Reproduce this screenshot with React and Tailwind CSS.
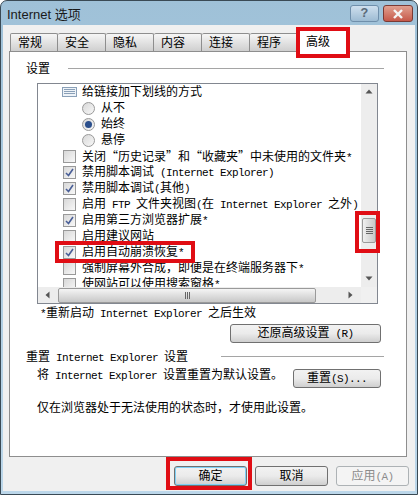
const cjk = "font-['Liberation_Mono','Noto_Sans_CJK_SC',monospace]";

function Latin({ children }) {
  return <span className="text-[11px] tracking-[-0.6px] whitespace-pre">{children}</span>;
}

function Quote({ children }) {
  return <span className="inline-block w-3 text-center font-['Noto_Sans_CJK_SC',sans-serif]">{children}</span>;
}

function Tab({ label, active }) {
  if (active) {
    return (
      <div className="relative z-10 -mt-1 h-[23px] w-[50px] rounded-t-[2px] border border-b-0 border-[#8e8e8e] bg-white pl-[7px] pt-[5px]">
        {label}
      </div>
    );
  }
  return (
    <div className="flex h-[18px] w-[48px] items-center rounded-t-[2px] border border-b-0 border-l-0 first:border-l border-[#8e8e8e] bg-gradient-to-b from-[#f6f6f6] to-[#cfcfcf] pl-[7px] pt-[3px]">
      {label}
    </div>
  );
}

function CheckBox({ checked }) {
  return (
    <div className="flex h-[13px] w-[13px] shrink-0 items-center justify-center border border-[#999] bg-gradient-to-br from-[#d8d8d8] to-[#f8f8f8]">
      {checked && (
        <svg width="9" height="9" viewBox="0 0 9 9">
          <path d="M1 5l2.5 2.5L8 1" fill="none" stroke="#4a5f97" strokeWidth="1.6" />
        </svg>
      )}
    </div>
  );
}

function Radio({ checked }) {
  return (
    <div className="flex h-[13px] w-[13px] shrink-0 items-center justify-center rounded-full border border-[#999] bg-gradient-to-br from-[#d8d8d8] to-[#f8f8f8]">
      {checked && <div className="h-[7px] w-[7px] rounded-full bg-[#2b4f8c]" />}
    </div>
  );
}

function Row({ control, children }) {
  return (
    <div className="flex h-4 shrink-0 items-center gap-[6px] whitespace-nowrap pl-[25px]">
      {control}
      <span className="pt-[2px]">{children}</span>
    </div>
  );
}

function Button({ children, className = '' }) {
  return (
    <div className={`flex items-center justify-center rounded-[3px] border border-[#707070] bg-gradient-to-b from-[#f2f2f2] via-[#ebebeb] to-[#cfcfcf] ${className}`}>
      {children}
    </div>
  );
}

function Arrow({ dir }) {
  const paths = {
    up: 'M4 1.5L7.5 5.5H.5z',
    down: 'M4 5.5L.5 1.5h7z',
    left: 'M1.5 4L5.5.5v7z',
    right: 'M5.5 4L1.5.5v7z',
  };
  return (
    <svg width="8" height="8" viewBox="0 0 8 8">
      <path d={paths[dir]} fill="#555" />
    </svg>
  );
}

export default function App() {
  return (
    <div className={`relative flex h-[495px] w-[418px] flex-col overflow-hidden rounded-t-[7px] border border-[#3a4a55] bg-gradient-to-b from-[#9fc1d8] to-[#bcd7ea] text-[12px] leading-4 text-black ${cjk}`}>
      {/* title bar */}
      <div className="flex h-6 shrink-0 justify-between pl-[6px] pr-1">
        <div className="pt-[6px] font-['Liberation_Sans','Noto_Sans_CJK_SC',sans-serif] text-[13px] text-[#1a1a1a]">Internet 选项</div>
        <div className="mt-[4px] flex h-[17px] gap-[4px]">
          <div className="flex w-[29px] items-center justify-center rounded-[3px] border border-[#6f8fab] bg-gradient-to-b from-[#cfe0ee] to-[#9dbbd3] text-[13px] font-bold text-[#5a6a7a]">?</div>
          <div className="flex w-[30px] items-center justify-center rounded-[3px] border border-[#7a3a34] bg-gradient-to-b from-[#e0a090] to-[#c5584a]">
            <svg width="14" height="10" viewBox="0 0 14 10">
              <path d="M3 1l8 8M11 1l-8 8" stroke="#f5f5f5" strokeWidth="2.4" />
            </svg>
          </div>
        </div>
      </div>

      {/* dialog body */}
      <div className="mx-[2px] mb-[3px] flex min-h-0 flex-1 flex-col bg-[#f0f0f0] px-[6px] pt-2">
        <div className="flex h-[18px] shrink-0 pl-[1px]">
          {['常规', '安全', '隐私', '内容', '连接', '程序'].map((t) => (
            <Tab key={t} label={t} />
          ))}
          <Tab label="高级" active />
        </div>

        <div className="flex h-[406px] w-[398px] shrink-0 flex-col border border-[#8e8e8e] bg-white px-4 pt-2">
          <div className="flex h-4 items-center">
            <span className="h-4 w-[42px] shrink-0 leading-[20px]">设置</span>
            <div className="mr-[6px] h-px flex-1 bg-[#a5a5a5]" />
          </div>

          <div className="ml-[11px] mt-[7px] flex h-[221px] w-[341px] flex-col border border-[#828790]">
            <div className="flex min-h-0 flex-1">
              <div className="flex min-w-0 flex-1 flex-col overflow-hidden">
                <Row
                  control={
                    <div className="-ml-px -mr-px flex h-[10px] w-[15px] shrink-0 flex-col gap-px border border-[#8aa0b8] bg-[#eef3f8] px-px pt-px">
                      <div className="h-px bg-[#8aa0b8]" />
                      <div className="h-px bg-[#8aa0b8]" />
                      <div className="h-px bg-[#8aa0b8]" />
                    </div>
                  }
                >
                  给链接加下划线的方式
                </Row>
                <div className="pl-[19px]">
                  <Row control={<Radio />}>从不</Row>
                  <Row control={<Radio checked />}>始终</Row>
                  <Row control={<Radio />}>悬停</Row>
                </div>
                <Row control={<CheckBox />}>关闭<Quote>“</Quote>历史记录<Quote>”</Quote>和<Quote>“</Quote>收藏夹<Quote>”</Quote>中未使用的文件夹<Latin>*</Latin></Row>
                <Row control={<CheckBox checked />}>禁用脚本调试<Latin> (Internet Explorer)</Latin></Row>
                <Row control={<CheckBox checked />}>禁用脚本调试<Latin>(</Latin>其他<Latin>)</Latin></Row>
                <Row control={<CheckBox />}>启用<Latin> FTP </Latin>文件夹视图<Latin>(</Latin>在<Latin> Internet Explorer </Latin>之外<Latin>)</Latin></Row>
                <Row control={<CheckBox checked />}>启用第三方浏览器扩展<Latin>*</Latin></Row>
                <Row control={<CheckBox />}>启用建议网站</Row>
                <Row control={<CheckBox checked />}>启用自动崩溃恢复<Latin>*</Latin></Row>
                <Row control={<CheckBox />}>强制屏幕外合成，即便是在终端服务器下<Latin>*</Latin></Row>
                <Row control={<CheckBox />}>使网站可以使用搜索窗格<Latin>*</Latin></Row>
              </div>

              {/* vertical scrollbar */}
              <div className="flex w-4 shrink-0 flex-col items-center bg-[#ededed]">
                <div className="flex h-4 shrink-0 items-center justify-center"><Arrow dir="up" /></div>
                <div className="mt-[118px] flex h-[25px] w-[14px] flex-col items-center justify-center gap-px rounded-[2px] border border-[#9a9a9a] bg-gradient-to-r from-[#f0f0f0] to-[#c8c8c8]">
                  <div className="h-px w-[7px] bg-[#666]" />
                  <div className="h-px w-[7px] bg-[#666]" />
                  <div className="h-px w-[7px] bg-[#666]" />
                  <div className="h-px w-[7px] bg-[#666]" />
                </div>
                <div className="mt-auto flex h-4 shrink-0 items-center justify-center"><Arrow dir="down" /></div>
              </div>
            </div>

            {/* horizontal scrollbar */}
            <div className="flex h-4 shrink-0 items-center bg-[#ededed]">
              <div className="flex w-5 shrink-0 justify-center"><Arrow dir="left" /></div>
              <div className="flex h-[15px] w-[258px] shrink-0 items-center justify-center gap-px rounded-[2px] border border-[#9a9a9a] bg-gradient-to-b from-[#f5f5f5] to-[#c8c8c8]">
                <div className="h-[7px] w-px bg-[#666]" />
                <div className="h-[7px] w-px bg-[#666]" />
                <div className="h-[7px] w-px bg-[#666]" />
              </div>
              <div className="ml-auto flex w-5 shrink-0 justify-center"><Arrow dir="right" /></div>
              <div className="h-full w-4 shrink-0 bg-[#f0f0f0]" />
            </div>
          </div>

          <div className="ml-[14px] mt-px h-4 whitespace-nowrap leading-[18px]"><Latin>*</Latin>重新启动<Latin> Internet Explorer </Latin>之后生效</div>

          <div className="mt-[3px] flex justify-end pr-[9px]">
            <Button className="h-[19px] w-[151px]">还原高级设置<Latin> (R)</Latin></Button>
          </div>

          <div className="mt-[5px] flex h-4 items-center">
            <span className="h-4 whitespace-nowrap leading-[20px]">重置<Latin> Internet Explorer </Latin>设置</span>
            <div className="ml-[33px] mr-[6px] h-px flex-1 bg-[#a5a5a5]" />
          </div>

          <div className="mt-[2px] flex items-start justify-between pl-[11px] pr-[9px]">
            <span className="h-4 whitespace-nowrap leading-[20px]">将<Latin> Internet Explorer </Latin>设置重置为默认设置。</span>
            <Button className="mt-[3px] h-[19px] w-[88px]">重置<Latin>(S)...</Latin></Button>
          </div>

          <div className="mt-3 h-4 whitespace-nowrap pl-[11px] leading-[18px]">仅在浏览器处于无法使用的状态时，才使用此设置。</div>
        </div>

        {/* footer buttons */}
        <div className="mt-[9px] flex justify-end gap-2">
          <Button className="h-5 w-[73px] border-[#3c7fb1] from-[#dff2fc] via-[#bfe3f7] to-[#8ecdf0] pt-px shadow-[inset_0_0_0_1px_#7fd0f5]">确定</Button>
          <Button className="h-5 w-[73px] pt-px">取消</Button>
          <Button className="h-5 w-[73px] border-[#adb2b5] from-[#f4f4f4] via-[#f4f4f4] to-[#f4f4f4] pt-px text-[#8c8c8c]">应用<Latin>(A)</Latin></Button>
        </div>
      </div>

      {/* red annotation boxes drawn on top of the screenshot */}
      <div className="absolute left-[295px] top-[26px] z-20 h-[31px] w-[54px] border-[4px] border-[#e00d14]" />
      <div className="absolute left-[354px] top-[210px] z-20 h-[42px] w-[25px] border-[4px] border-[#e00d14]" />
      <div className="absolute left-[54px] top-[240px] z-20 h-[22px] w-[140px] border-[4px] border-[#e00d14]" />
      <div className="absolute left-[165px] top-[456px] z-20 h-[33px] w-[86px] border-[4px] border-[#e00d14]" />
    </div>
  );
}
